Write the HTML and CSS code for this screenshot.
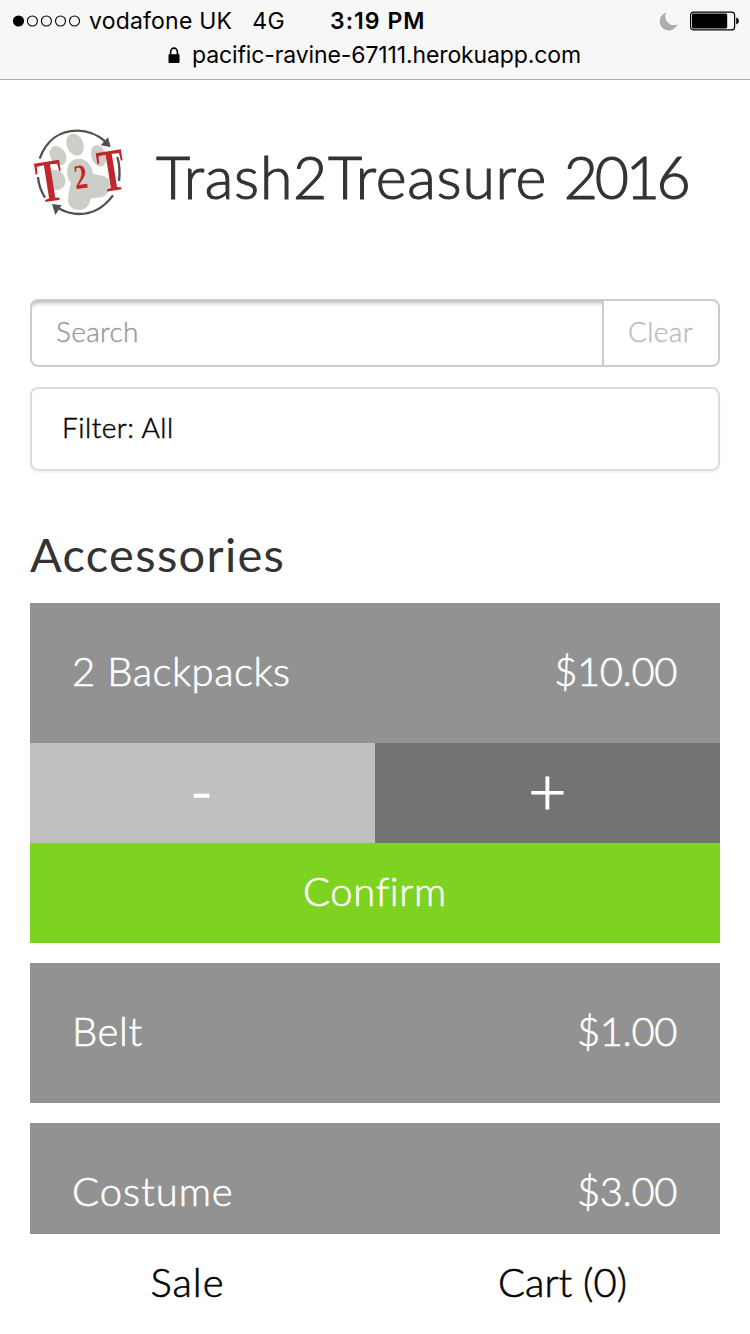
FILE: index.html
```html
<!DOCTYPE html>
<html lang="en">
<head>
<meta charset="utf-8">
<title>Trash2Treasure 2016</title>
<link rel="stylesheet" href="styles.css">
</head>
<body>
<header class="browser-bar">
  <div class="status">
    <div class="carrier">
      <svg class="signal" width="70" height="14" viewBox="0 0 70 14">
        <circle cx="6.5" cy="7" r="5.6"/>
        <g fill="none" stroke="#000" stroke-width="1.1">
          <circle cx="20.4" cy="7" r="5"/><circle cx="34.4" cy="7" r="5"/><circle cx="48.5" cy="7" r="5"/><circle cx="62.5" cy="7" r="5"/>
        </g>
      </svg>
      <span class="operator">vodafone UK</span>
      <span class="network">4G</span>
    </div>
    <span class="clock">3:19 PM</span>
    <div class="indicators">
      <svg width="19" height="19" viewBox="0 0 19 19"><path d="M7.2 .6A9.1 9.1 0 1 0 18.5 12.2A8.6 8.6 0 0 1 7.2 .6Z" fill="#adadad"/></svg>
      <svg width="50" height="20" viewBox="0 0 50 20">
        <rect x=".6" y="1.1" width="44" height="17.8" rx="3" fill="none" stroke="#000" stroke-width="1.2"/>
        <rect x="2" y="2.6" width="35.2" height="14.8" rx="1.4"/>
        <path d="M46.2 6.6Q49 7.6 49 10T46.2 13.4Z"/>
      </svg>
    </div>
  </div>
  <div class="address">
    <svg width="12" height="17" viewBox="0 0 12 17"><path d="M2.6 8V5a3.4 3.9 0 0 1 6.8 0V8" fill="none" stroke="#000" stroke-width="1.6"/><rect x=".5" y="7.2" width="11" height="8.8" rx=".7"/></svg>
    <span>pacific-ravine-67111.herokuapp.com</span>
  </div>
</header>

<main class="page">
  <div class="brand">
    <svg class="logo" width="120" height="105" viewBox="0 0 360 315">
      <g fill="#cecec9">
        <ellipse cx="114" cy="107" rx="23" ry="31" transform="rotate(-32 114 107)"/>
        <ellipse cx="165" cy="74" rx="25" ry="34" transform="rotate(-22 165 74)"/>
        <ellipse cx="236" cy="107" rx="22" ry="33" transform="rotate(-18 236 107)"/>
        <ellipse cx="108" cy="180" rx="27" ry="31" transform="rotate(-35 108 180)"/>
        <path d="M176 116C200 116 216 136 219 162C233 165 256 165 266 178C276 200 266 228 242 232C224 236 216 232 211 240C207 258 196 270 178 270C158 271 143 258 144 238C145 218 149 204 153 190C142 176 139 160 143 144C147 126 160 116 176 116Z"/>
      </g>
      <g fill="none" stroke="#515150" stroke-width="7">
        <path d="M59 116C80 58 122 32 172 32C205 32 234 45 258 66"/>
        <path d="M279 226C248 268 215 282 177 282C152 282 132 274 114 264"/>
        <path d="M54 171C56 194 63 214 75 233"/>
        <path d="M292 111C299 133 300 158 297 183"/>
      </g>
      <path d="M264 52L272 81L242 76Z" fill="#515150"/>
      <path d="M96 252L125 256L106 285Z" fill="#515150"/>
      <g class="logo-letters" fill="#c0272d">
        <text font-size="182" transform="translate(98 243) rotate(-9) scale(.66 1)">T</text>
        <text font-size="104" transform="translate(187 205) rotate(-8) scale(.76 1)">2</text>
        <text font-size="182" transform="translate(283 211) rotate(-9) scale(.66 1)">T</text>
      </g>
    </svg>
    <h1 class="title">Trash2Treasure <span class="year">2016</span></h1>
  </div>

  <div class="search">
    <div class="search-field">Search</div>
    <div class="search-clear">Clear</div>
  </div>
  <div class="filter">Filter: All</div>

  <h2 class="section-title">Accessories</h2>
  <div class="items">
    <section class="item">
      <div class="item-row"><span class="backpacks">2 Backpacks</span><span class="price">$10.00</span></div>
      <div class="stepper"><div class="minus">-</div><div class="plus">+</div></div>
      <div class="confirm">Confirm</div>
    </section>
    <section class="item">
      <div class="item-row"><span>Belt</span><span class="price">$1.00</span></div>
    </section>
    <section class="item">
      <div class="item-row"><span class="costume">Costume</span><span class="price">$3.00</span></div>
    </section>
  </div>
</main>

<nav class="tabs"><span class="tab-sale">Sale</span><span class="tab-cart">Cart (0)</span></nav>
</body>
</html>
```

FILE: styles.css
```css
* { box-sizing: border-box; }
body {
  margin: 0;
  width: 750px;
  height: 1334px;
  overflow: hidden;
  display: flex;
  flex-direction: column;
  background: #fff;
  font-family: Lato, sans-serif;
  font-weight: 300;
  white-space: nowrap;
}
svg { display: block; flex: none; }

.browser-bar {
  flex: none;
  height: 80px;
  padding-top: 4px;
  background: #f7f7f7;
  border-bottom: 1px solid #b0b0b0;
  font: 400 23px/34px Inter, sans-serif;
  color: #000;
}
.status {
  display: grid;
  grid-template-columns: 318px 1fr auto;
  align-items: center;
  height: 34px;
  padding: 0 10px 0 12px;
}
.carrier { display: flex; align-items: center; }
.operator { margin-left: 7px; letter-spacing: .2px; }
.network { margin-left: 20px; letter-spacing: .5px; }
.clock { font-weight: 600; letter-spacing: 1.05px; }
.indicators { display: flex; align-items: center; gap: 12px; }
.address {
  display: flex;
  align-items: center;
  height: 34px;
  padding-left: 168px;
  gap: 12px;
  letter-spacing: -.12px;
}

.page { flex: none; height: 1154px; overflow: hidden; padding: 40px 30px 0; }
.brand { display: flex; margin-left: -10px; height: 105px; }
.title {
  margin: 0 0 0 16px;
  font-size: 59px;
  line-height: 113px;
  font-weight: 300;
  letter-spacing: .75px;
  color: #333;
  -webkit-text-stroke: 1.1px #333;
}
.year { letter-spacing: -3.3px; }
.search {
  display: flex;
  height: 68px;
  margin-top: 74px;
  border: 2px solid #ccc;
  border-radius: 8px;
  font-size: 28px;
  line-height: 61px;
  letter-spacing: .35px;
}
.search-field {
  width: 570px;
  padding-left: 24px;
  border-radius: 6px 0 0 0;
  box-shadow: inset 0 6px 4px -4px rgba(0,0,0,.3);
  color: #999;
  -webkit-text-stroke: .4px #999;
}
.search-clear {
  flex: 1;
  padding-left: 24px;
  border-left: 2px solid #ccc;
  color: #bbb;
  -webkit-text-stroke: .4px #bbb;
}
.filter {
  height: 84px;
  margin-top: 20px;
  padding-left: 30px;
  border: 2px solid #ddd;
  border-radius: 8px;
  box-shadow: 0 2px 2px rgba(0,0,0,.05);
  font-size: 28px;
  line-height: 76px;
  letter-spacing: .5px;
  color: #000;
  -webkit-text-stroke: .5px #000;
}
.section-title {
  margin: 56px 0 0;
  height: 76px;
  font-size: 47px;
  line-height: 54px;
  font-weight: 400;
  letter-spacing: 1.3px;
  color: #333;
}
.items {
  display: flex;
  flex-direction: column;
  gap: 20px;
  font-size: 40px;
  line-height: 136px;
  letter-spacing: .6px;
  color: #fff;
  -webkit-text-stroke: .6px #fff;
}
.item-row {
  display: flex;
  justify-content: space-between;
  height: 140px;
  padding: 0 43px 0 42px;
  background: #929292;
}
.backpacks { letter-spacing: .55px; }
.costume { letter-spacing: 1px; }
.price { letter-spacing: -.45px; }
.stepper {
  display: grid;
  grid-template-columns: 1fr 1fr;
  height: 100px;
  text-align: center;
  letter-spacing: 0;
}
.minus { padding-right: 2px; background: #c0c0c0; font-size: 60px; line-height: 95px; -webkit-text-stroke: 1.6px #fff; }
.plus { background: #737373; font-size: 66px; line-height: 94px; -webkit-text-stroke: 1.2px #fff; }
.confirm { height: 100px; line-height: 96px; text-align: center; background: #7ed321; letter-spacing: .6px; }
.tabs {
  flex: none;
  display: grid;
  grid-template-columns: 1fr 1fr;
  height: 100px;
  font-size: 40px;
  line-height: 96px;
  text-align: center;
  background: #fff;
  color: #000;
  -webkit-text-stroke: .6px #000;
}
.tab-sale { letter-spacing: 1px; }
.logo-letters { font-family: "Liberation Serif", serif; font-weight: 700; text-anchor: middle; }
```
